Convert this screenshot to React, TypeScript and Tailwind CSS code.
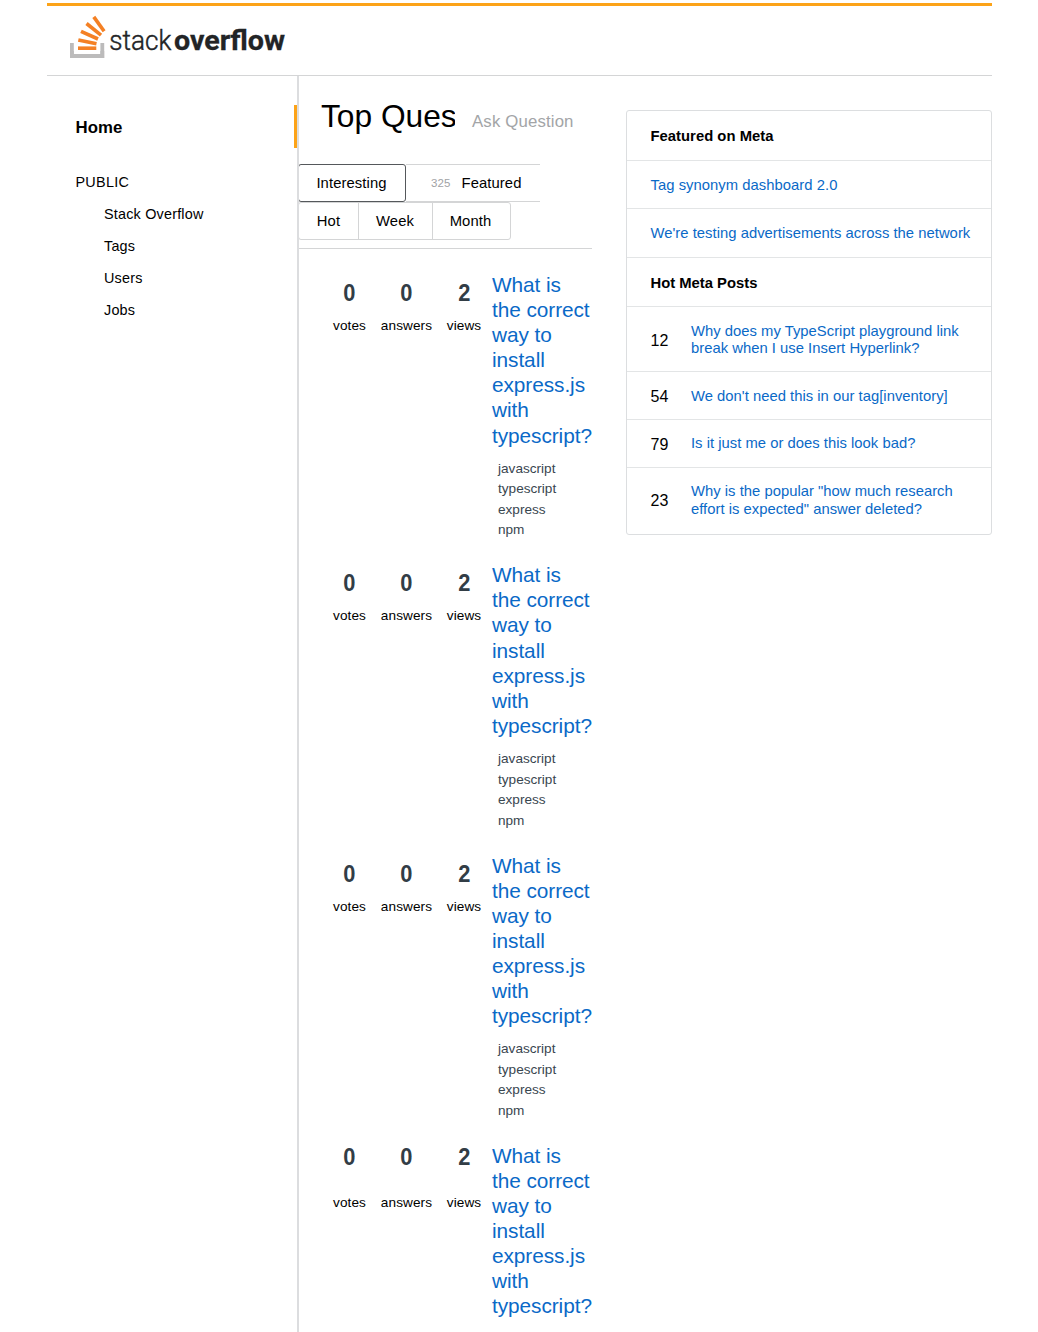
import React from 'react';

const tags = ['javascript', 'typescript', 'express', 'npm'];
const stats = [['0', 'votes', 'w-[51px]'], ['0', 'answers', 'w-[63px]'], ['2', 'views', 'w-[52px]']];

function Question({ last = false }: { last?: boolean }) {
  return (
    <article className="flex h-[290.3px] pl-[25px]">
      <div className="flex w-[169.4px]">
        {stats.map(([n, label, w]) => (
          <div key={label} className={`${w} flex shrink-0 flex-col items-center`}>
            <span className={`scale-x-95 text-[23px] leading-[26px] font-bold text-[#323d46] ${last ? 'mt-px' : 'mt-[8px]'}`}>{n}</span>
            <span className={`text-[13.6px] leading-4 tracking-[0.1px] ${last ? 'mt-[25px]' : 'mt-[12px]'}`}>{label}</span>
          </div>
        ))}
      </div>
      <div className="w-[100px] shrink-0">
        <a className="block text-[20.8px] leading-[25.1px] tracking-[-0.06px] text-[#0a69c7]">
          {['What is', 'the correct', 'way to', 'install', 'express.js', 'with', 'typescript?'].map((l) => (
            <span key={l} className="block w-fit whitespace-nowrap">{l}</span>
          ))}
        </a>
        <ul className="mt-[11px] pl-[6px] text-[13.6px] leading-[20.6px] text-[#39464f]">
          {tags.map((t) => <li className="w-fit" key={t}>{t}</li>)}
        </ul>
      </div>
    </article>
  );
}

function Logo() {
  return (
    <svg width="220" height="46" viewBox="68 14 220 46" className="ml-[21px] mt-[8px]" role="img" aria-label="Stack Overflow">
      <path d="M71.9 51V56H102.3V51" fill="none" stroke="#bcbbbb" strokeWidth="3.8" />
      <path d="M71.9 43V56H102.3V43" fill="none" stroke="#bcbbbb" strokeWidth="3.8" />
      <g stroke="#f48024" strokeWidth="3.6">
        <path d="M78 48.2H96.3" />
        <path d="M78.3 40L96.5 43.8" />
        <path d="M81 31.3L98 39" />
        <path d="M86.5 23.5L101 35.2" />
        <path d="M93.8 16.9L104.1 31.2" />
      </g>
      <text x="109.3" y="50" fontSize="28" fontFamily="Roboto" fontWeight="300" fill="#222426" stroke="#222426" strokeWidth="0.45" textLength="62" lengthAdjust="spacingAndGlyphs">stack</text>
      <text x="174" y="50" fontSize="28" fontFamily="Roboto" fontWeight="700" fill="#222426" stroke="#222426" strokeWidth="0.3" textLength="111" lengthAdjust="spacingAndGlyphs">overflow</text>
    </svg>
  );
}

const posts: [string, string[], string][] = [
  ['12', ['Why does my TypeScript playground link', 'break when I use Insert Hyperlink?'], 'h-[65px] pt-[3px]'],
  ['54', ["We don't need this in our tag[inventory]"], 'h-[48px] pt-[3px]'],
  ['79', ['Is it just me or does this look bad?'], 'h-[48px] pt-[2px]'],
  ['23', ['Why is the popular "how much research', 'effort is expected" answer deleted?'], 'h-[65px] pt-px'],
];

export default function App() {
  return (
    <div className="h-[1332px] overflow-hidden bg-white font-['Liberation_Sans',Arial,sans-serif] text-black">
      <div className="ml-[47px] w-[945px]">
        <header className="mt-[3px] h-[73px] border-t-[3px] border-b border-t-[#fca318] border-b-[#d4d5d6]"><Logo /></header>
        <div className="flex">
          <nav className="relative h-[1256px] w-[252px] shrink-0 border-r-2 border-[#dcdddf] pl-[28px]">
            <span className="absolute top-[29px] right-0 h-[43px] w-[3px] bg-[#fca318]" />
            <div className="mt-[42px] pl-[0.5px] text-[16.8px] leading-5 font-bold tracking-[0.1px]">Home</div>
            <div className="mt-[35px] pl-[0.4px] text-[14.4px] leading-[18px] tracking-[0.3px]">PUBLIC</div>
            <ul className="mt-[7px] pl-[29px] text-[14.4px] leading-8 tracking-[0.2px]">
              {['Stack Overflow', 'Tags', 'Users', 'Jobs'].map((x) => <li key={x}>{x}</li>)}
            </ul>
          </nav>
          <main className="w-[293px] shrink-0">
            <div className="flex h-[88px] items-start pl-[22px]">
              <h1 className="mt-[21px] w-[134px] overflow-hidden text-[31.7px] leading-[38px] whitespace-nowrap">Top Questions</h1>
              <span className="mt-[36px] ml-[17px] text-[16.8px] leading-5 tracking-[0.15px] whitespace-nowrap text-[#a3a5a7]">Ask Question</span>
            </div>
            <div className="-ml-px text-[14.8px] tracking-[0.1px]">
              <div className="flex h-[38px] w-[242px]">
                <div className="flex w-[108px] items-center justify-center rounded-[3px] border border-[#55585b] pr-px">Interesting</div>
                <div className="flex flex-1 items-center border-y border-[#d4d5d6] pl-[25px]"><span className="mt-[2px] mr-[11px] text-[11.5px] text-[#9fa2a5]">325</span>Featured</div>
              </div>
              <div className="flex h-[38px] w-[213px] items-center rounded-[3px] border border-[#d4d5d6]">
                <div className="flex h-full w-[60px] items-center justify-center border-r border-[#d4d5d6]">Hot</div>
                <div className="flex h-full w-[74px] items-center justify-center border-r border-[#d4d5d6] pr-px">Week</div>
                <div className="flex h-full flex-1 items-center justify-center pr-[2px]">Month</div>
              </div>
            </div>
            <div className="mt-[8px] border-b border-[#d4d5d6]" />
            <div className="mt-[23px]">
              <Question /><Question /><Question /><Question last />
            </div>
          </main>
          <aside className="mt-[34px] ml-[34px] h-[425px] w-[366px] shrink-0 rounded-[3px] border border-[#dcdee0] text-[14.8px]">
            <h2 className="flex h-[50px] items-center border-b border-[#e3e5e6] pt-px pl-[23.5px] font-bold tracking-[0.03px]">Featured on Meta</h2>
            <div className="flex h-[48px] items-center border-b border-[#e3e5e6] pt-[2px] pl-[23.5px] tracking-[0.04px] text-[#0a69c7]">Tag synonym dashboard 2.0</div>
            <div className="flex h-[49px] items-center border-b border-[#e3e5e6] pl-[23.5px] tracking-[0.03px] text-[#0a69c7]">We're testing advertisements across the network</div>
            <h2 className="flex h-[49px] items-center border-b border-[#e3e5e6] pt-[3px] pl-[23.5px] font-bold">Hot Meta Posts</h2>
            {posts.map(([n, lines, h]) => (
              <div key={n} className={`flex items-center border-b border-[#e3e5e6] pl-[23.5px] last:border-0 ${h}`}>
                <span className="w-fit text-[16px]">{n}</span>
                <div className="-mt-px ml-[22.7px] leading-[17.5px] tracking-[0.02px] text-[#0a69c7]">
                  {lines.map((l) => <span className="block w-fit whitespace-nowrap" key={l}>{l}</span>)}
                </div>
              </div>
            ))}
          </aside>
        </div>
      </div>
    </div>
  );
}
